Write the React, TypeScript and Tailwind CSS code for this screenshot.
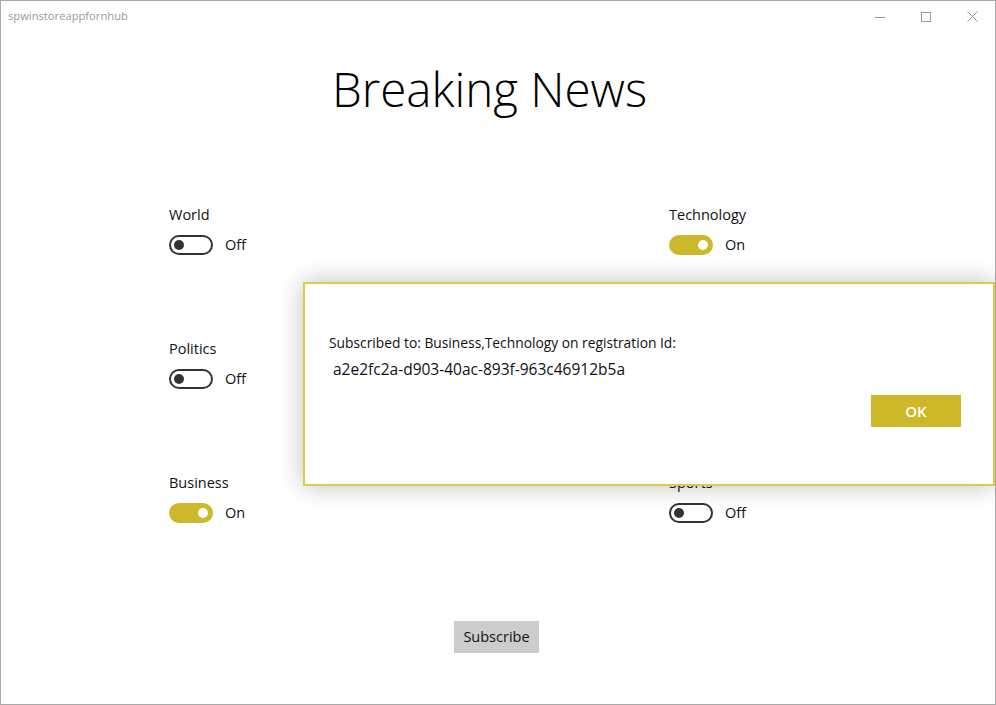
import React from "react";

type Topic = { label: string; on: boolean };

const rows: Topic[][] = [
  [
    { label: "World", on: false },
    { label: "Technology", on: true },
  ],
  [
    { label: "Politics", on: false },
    { label: "Entertainment", on: false },
  ],
  [
    { label: "Business", on: true },
    { label: "Sports", on: false },
  ],
];

function Toggle({ on }: { on: boolean }) {
  return (
    <div className="flex items-center h-5">
      {on ? (
        <div className="w-[44px] h-[20px] rounded-full bg-[#cdb829] flex items-center justify-end pr-[5px]">
          <div className="w-2.5 h-2.5 rounded-full bg-white" />
        </div>
      ) : (
        <div className="w-[44px] h-[20px] rounded-full border-2 border-[#333333] flex items-center pl-[3px]">
          <div className="w-2.5 h-2.5 rounded-full bg-[#333333]" />
        </div>
      )}
      <span className="ml-3 text-[14.5px] text-[#111]">{on ? "On" : "Off"}</span>
    </div>
  );
}

export default function App() {
  return (
    <div
      className="relative w-[996px] h-[705px] border border-[#aaaaaa] bg-white overflow-hidden"
      style={{ fontFamily: '"Open Sans", "Noto Sans", sans-serif' }}
    >
      {/* title bar */}
      <div className="h-[31px] flex items-center justify-between">
        <span className="ml-[7px] text-[11.2px] text-[#9a9a9a]">spwinstoreappfornhub</span>
        <div className="flex items-center">
          <div className="w-[46px] h-[31px] flex items-center justify-center">
            <svg width="10" height="10" viewBox="0 0 10 10">
              <line x1="0" y1="5.5" x2="10" y2="5.5" stroke="#999" strokeWidth="1" />
            </svg>
          </div>
          <div className="w-[46px] h-[31px] flex items-center justify-center">
            <svg width="10" height="10" viewBox="0 0 10 10">
              <rect x="0.5" y="0.5" width="9" height="9" fill="none" stroke="#999" strokeWidth="1" />
            </svg>
          </div>
          <div className="w-[46px] h-[31px] flex items-center justify-center">
            <svg width="11" height="11" viewBox="0 0 11 11">
              <line x1="0.5" y1="0.5" x2="10.5" y2="10.5" stroke="#999" strokeWidth="1" />
              <line x1="10.5" y1="0.5" x2="0.5" y2="10.5" stroke="#999" strokeWidth="1" />
            </svg>
          </div>
        </div>
      </div>

      <h1 className="mt-[27px] pr-[17px] text-center text-[47.5px] leading-[60px] font-light text-black">
        Breaking News
      </h1>

      <div className="mt-[86px] pl-[168px] flex flex-col gap-[84px]">
        {rows.map((row, i) => (
          <div key={i} className="flex">
            {row.map((t) => (
              <div key={t.label} className="w-[500px] shrink-0">
                <div className="text-[14.5px] leading-5 text-[#111]">{t.label}</div>
                <div className="mt-2.5">
                  <Toggle on={t.on} />
                </div>
              </div>
            ))}
          </div>
        ))}
      </div>

      <div className="mt-[98px] flex justify-center">
        <button className="ml-[-3px] h-8 w-[85px] bg-[#cccccc] text-[14.5px] text-[#111]">Subscribe</button>
      </div>

      {/* message dialog */}
      <div className="absolute left-[302px] top-[281px] w-[692px] h-[204px] border-2 border-[#dfcb43] bg-white shadow-[0_0_24px_rgba(0,0,0,0.25)]">
        <div className="pt-[49px] pl-[24px] text-[#111]">
          <p className="text-[13.8px] leading-5">Subscribed to: Business,Technology on registration Id:</p>
          <p className="mt-[6px] pl-1 text-[15.5px] leading-5">a2e2fc2a-d903-40ac-893f-963c46912b5a</p>
        </div>
        <div className="mt-[16px] flex justify-end pr-[32px]">
          <button className="w-[90px] h-8 bg-[#cdb829] text-white text-[15px] font-semibold">OK</button>
        </div>
      </div>
    </div>
  );
}
